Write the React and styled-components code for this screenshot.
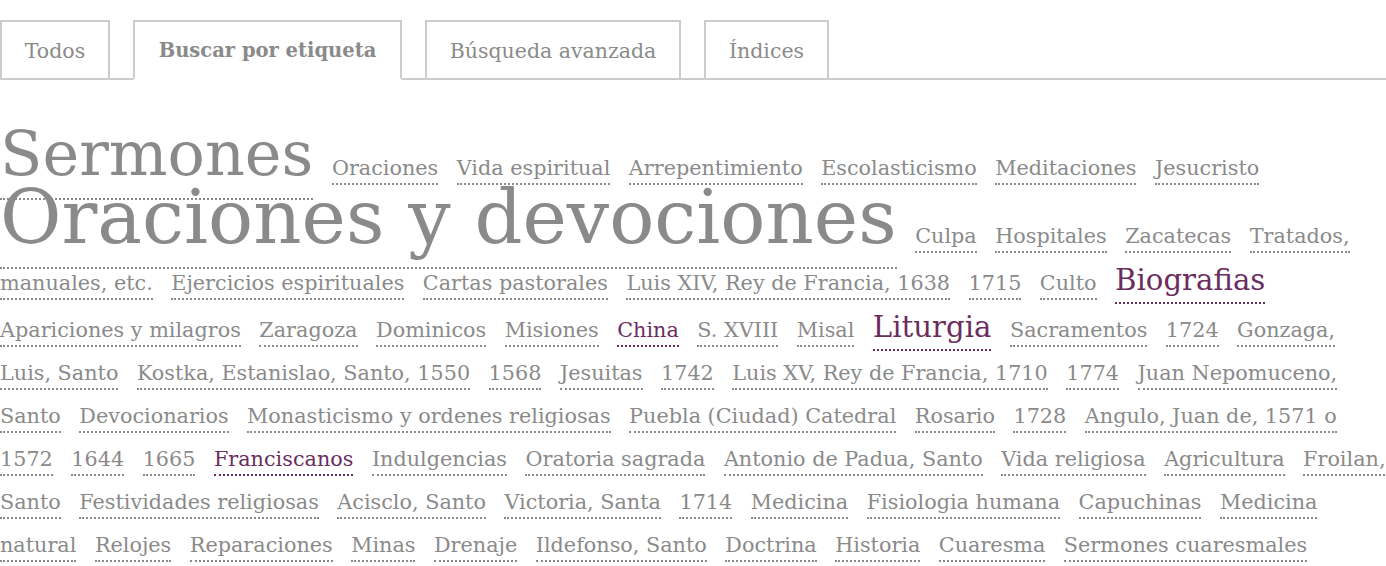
import React from "react";
import styled, { createGlobalStyle } from "styled-components";

const GlobalStyle = createGlobalStyle`
    body {
        margin: 0;
        background: #fff;
        font-family: "DejaVu Serif", "Liberation Serif", serif;
    }
`

const Page = styled.div`
    padding-top: 20px;
    overflow: hidden;
`

const TabBar = styled.nav`
    display: flex;
    flex-direction: row;
    gap: 23px;
    border-bottom: 2px solid #ccc;
`

const Tab = styled.a`
    display: block;
    box-sizing: border-box;
    width: ${(props) => props.$width}px;
    margin-bottom: -2px;
    height: 60px;
    line-height: 58px;
    text-align: center;
    border: 2px solid #ccc;
    border-bottom-color: ${(props) => (props.$active ? "#fff" : "#ccc")};
    color: #8a8a8a;
    font-size: ${(props) => (props.$active ? "19.5px" : "20.5px")};
    font-weight: ${(props) => (props.$active ? "bold" : "normal")};
    text-decoration: none;
    white-space: nowrap;
`

const Cloud = styled.div`
    margin-top: 52px;
    font-size: 20.75px;
    line-height: 43px;
    color: #8a8a8a;
`

const sizes = {
    s: { font: "20.75px", line: "43px", pad: "3px" },
    m: { font: "29.2px", line: "44px", pad: "5px" },
    xl: { font: "62px", line: "43px", pad: "8px" },
    xxl: { font: "75px", line: "54px", pad: "6px" },
}

const Tag = styled.a`
    font-size: ${(props) => sizes[props.$size].font};
    line-height: ${(props) => sizes[props.$size].line};
    padding-bottom: ${(props) => sizes[props.$size].pad};
    color: ${(props) => (props.$hot ? "#6b2d5e" : "#8a8a8a")};
    text-decoration: none;
    border-bottom: 2px dotted currentColor;
    margin-right: 11.9px;
`

const tabs = [
    { label: "Todos", width: 110 },
    { label: "Buscar por etiqueta", width: 269, active: true },
    { label: "Búsqueda avanzada", width: 256 },
    { label: "Índices", width: 125 },
]

// [label, size, purple?]
const tags = [
    ["Sermones", "xl"],
    ["Oraciones"],
    ["Vida espiritual"],
    ["Arrepentimiento"],
    ["Escolasticismo"],
    ["Meditaciones"],
    ["Jesucristo"],
    ["Oraciones y devociones", "xxl"],
    ["Culpa"],
    ["Hospitales"],
    ["Zacatecas"],
    ["Tratados, manuales, etc."],
    ["Ejercicios espirituales"],
    ["Cartas pastorales"],
    ["Luis XIV, Rey de Francia, 1638"],
    ["1715"],
    ["Culto"],
    ["Biografias", "m", true],
    ["Apariciones y milagros"],
    ["Zaragoza"],
    ["Dominicos"],
    ["Misiones"],
    ["China", "s", true],
    ["S. XVIII"],
    ["Misal"],
    ["Liturgia", "m", true],
    ["Sacramentos"],
    ["1724"],
    ["Gonzaga, Luis, Santo"],
    ["Kostka, Estanislao, Santo, 1550"],
    ["1568"],
    ["Jesuitas"],
    ["1742"],
    ["Luis XV, Rey de Francia, 1710"],
    ["1774"],
    ["Juan Nepomuceno, Santo"],
    ["Devocionarios"],
    ["Monasticismo y ordenes religiosas"],
    ["Puebla (Ciudad) Catedral"],
    ["Rosario"],
    ["1728"],
    ["Angulo, Juan de, 1571 o 1572"],
    ["1644"],
    ["1665"],
    ["Franciscanos", "s", true],
    ["Indulgencias"],
    ["Oratoria sagrada"],
    ["Antonio de Padua, Santo"],
    ["Vida religiosa"],
    ["Agricultura"],
    ["Froilan, Santo"],
    ["Festividades religiosas"],
    ["Acisclo, Santo"],
    ["Victoria, Santa"],
    ["1714"],
    ["Medicina"],
    ["Fisiologia humana"],
    ["Capuchinas"],
    ["Medicina natural"],
    ["Relojes"],
    ["Reparaciones"],
    ["Minas"],
    ["Drenaje"],
    ["Ildefonso, Santo"],
    ["Doctrina"],
    ["Historia"],
    ["Cuaresma"],
    ["Sermones cuaresmales"],
]

export default function App() {
    return (
        <Page>
            <GlobalStyle />
            <TabBar>
                {tabs.map((tab) => (
                    <Tab key={tab.label} href="#" $width={tab.width} $active={tab.active}>
                        {tab.label}
                    </Tab>
                ))}
            </TabBar>
            <Cloud>
                {tags.map(([label, size = "s", hot]) => (
                    <React.Fragment key={label}>
                        <Tag href="#" $size={size} $hot={hot}>
                            {label}
                        </Tag>{" "}
                    </React.Fragment>
                ))}
            </Cloud>
        </Page>
    )
}
